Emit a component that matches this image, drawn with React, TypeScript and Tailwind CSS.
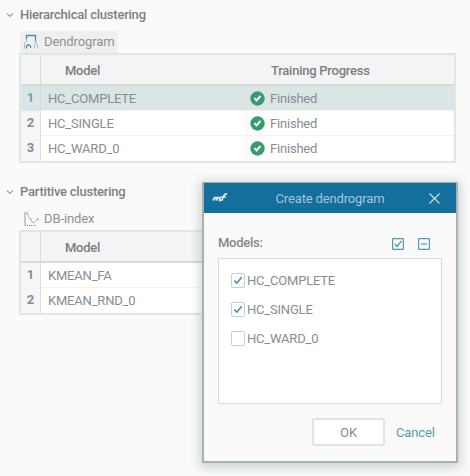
import { ReactNode, useState } from "react";

interface ModelRow {
  name: string;
  status: string;
}

const HIERARCHICAL: ModelRow[] = [
  { name: "HC_COMPLETE", status: "Finished" },
  { name: "HC_SINGLE", status: "Finished" },
  { name: "HC_WARD_0", status: "Finished" },
];

const PARTITIVE: ModelRow[] = [
  { name: "KMEAN_FA", status: "" },
  { name: "KMEAN_RND_0", status: "" },
];

function Chevron() {
  return (
    <svg className="w-2 h-2 shrink-0" viewBox="0 0 8 8" fill="none" stroke="#9aa4a8" strokeWidth="1.2">
      <path d="M1 2.5 4 5.5 7 2.5" />
    </svg>
  );
}

function DendrogramIcon() {
  return (
    <svg className="w-4 h-4 shrink-0" viewBox="0 0 16 16" fill="none">
      <path d="M1.5 14.5V9L3.5 7.5V3" stroke="#b3bdc1" />
      <path d="M3.5 5V1.5H12.5V8" stroke="#3d91b3" strokeWidth="1.3" />
      <path d="M12.5 7V9.5L11.5 10V14M12.5 8.5 14.5 10V14.5" stroke="#b3bdc1" />
      <path d="M3.5 14.5V12L5.5 10.5 7.5 12V14" stroke="#3d91b3" strokeWidth="1.3" />
    </svg>
  );
}

function IndexIcon() {
  return (
    <svg className="w-4 h-4 shrink-0" viewBox="0 0 16 16" fill="none">
      <path d="M2 1V14" stroke="#aab6bb" strokeWidth="1.4" />
      <path d="M2 1.5H3.8L6 6.5 10 12 14.5 8.5" stroke="#aab6bb" />
      <path d="M2 14.5H14" stroke="#4a98b6" strokeDasharray="1 1" />
      <path d="M4 2.5h1v1h-1zM7.5 7.5h1v1h-1zM14 7.5h1.4v1.4h-1.4z" fill="#3d91b3" />
    </svg>
  );
}

function DoneIcon() {
  return (
    <svg className="w-[15px] h-[15px] shrink-0" viewBox="0 0 15 15" fill="none">
      <circle cx="7.5" cy="7.5" r="7.2" fill="#389b6c" />
      <path d="M4.5 7 6.5 9.5 10.5 5" stroke="#fff" strokeWidth="2" />
    </svg>
  );
}

function Section({ title, tool, active, children }: { title: string; tool: ReactNode; active?: boolean; children: ReactNode }) {
  return (
    <section>
      <h2 className="flex items-center gap-1.5 h-5 text-[13px] font-medium tracking-[-0.22px] text-[#7a8185]">
        <Chevron />
        {title}
      </h2>
      <div className="pl-[13px]">
        <button
          className={`flex items-center gap-[5px] h-[22px] mt-[6px] ml-[1px] pl-[3px] pr-[3px] text-[13px] tracking-[-0.1px] text-[#8b9195] ${
            active ? "bg-[#efefef]" : ""
          }`}
        >
          {tool}
        </button>
        {children}
      </div>
    </section>
  );
}

function ModelTable({ rows, selected }: { rows: ModelRow[]; selected?: number }) {
  return (
    <div className="w-[437px] border-2 border-[#dfe6e7] bg-white">
      <div className="flex h-[31px] border-b-2 border-[#d3dbdb] bg-[#f4f4f4] text-[13px] font-medium tracking-[-0.25px] text-[#787e82]">
        <div className="w-5 shrink-0 border-r border-[#d6dfe0]" />
        <div className="w-[206px] shrink-0 pl-[24px] leading-[31px]">Model</div>
        <div className="pl-[24px] leading-[31px]">Training Progress</div>
      </div>
      {rows.map((row, i) => (
        <div
          key={row.name}
          className={`flex h-[25px] text-[13px] tracking-[-0.2px] text-[#868d91] ${i === selected ? "bg-[#dce5e6]" : ""}`}
        >
          <div
            className={`w-5 shrink-0 border-r border-[#d6dfe0] text-center leading-6 font-bold ${
              i === selected ? "text-[#6aa3bb]" : "bg-[#f6f6f6]"
            }`}
          >
            {i + 1}
          </div>
          <div
            className={`flex flex-1 border-b leading-[26px] ${
              i === selected ? "border-[#f1f3f3]" : i === rows.length - 1 ? "border-white" : "border-[#f1f3f3]"
            }`}
          >
            <div className={`w-[206px] shrink-0 border-r pl-[7px] ${i === selected ? "border-[#dce5e6]" : "border-[#f1f3f3]"}`}>
              {row.name}
            </div>
            {row.status && (
              <div className="flex items-center gap-[5px] pl-[3px]">
                <DoneIcon />
                <span className="pt-px">{row.status}</span>
              </div>
            )}
          </div>
        </div>
      ))}
    </div>
  );
}

function CheckRow({ name, checked, onToggle }: { name: string; checked: boolean; onToggle: () => void }) {
  return (
    <button onClick={onToggle} className="flex items-center h-[29px] gap-[2px] text-[13px] tracking-[-0.2px] text-[#868d91]">
      <svg className="w-[14px] h-[15px] shrink-0" viewBox="0 0 14 15" fill="none">
        <rect x=".5" y=".5" width="13" height="14" rx="1.5" fill="#fff" stroke="#c4d0d3" />
        {checked && <path d="M3.2 7.5 5.8 10.2 10.7 4.3" stroke="#3f8bab" strokeWidth="1.5" />}
      </svg>
      {name}
    </button>
  );
}

function CreateDialog() {
  const [checked, setChecked] = useState(["HC_COMPLETE", "HC_SINGLE"]);

  const toggle = (name: string) =>
    setChecked((prev) => (prev.includes(name) ? prev.filter((n) => n !== name) : [...prev, name]));

  return (
    <div className="absolute left-[202px] top-[182px] w-[256px] h-[281px] border-2 border-t-[1px] border-[#abafb0] bg-[#fafafa] shadow-[0_2px_10px_2px_rgba(80,115,115,0.3)]">
      {/* Title bar */}
      <div className="flex items-center h-[30px] pl-2 pr-4 bg-[#136f9c] text-[#a6c6d6]">
        <svg className="w-4 h-3 shrink-0" viewBox="0 0 16 12" fill="none" stroke="#e0ebf0" strokeWidth="1.7">
          <path d="M1 8.5 2.5 5.5 4.5 5.5 4 8.5 6 5.5 8 5.5 7.5 8.5 10 8 12 3.5 13 2.2 15 1.8M9 5H14" />
        </svg>
        <span className="flex-1 pl-[3px] pt-0.5 text-center text-[13px] tracking-[-0.15px]">Create dendrogram</span>
        <svg className="w-[11px] h-[11px] shrink-0" viewBox="0 0 11 11" fill="none" stroke="#c6dbe4" strokeWidth="1.2">
          <path d="M.5 .5 10.5 10.5M10.5 .5 .5 10.5" />
        </svg>
      </div>

      {/* Model picker */}
      <div className="flex items-center h-5 mt-5 pl-[14px] pr-[26px] text-[13px] font-medium tracking-[-0.25px] text-[#82898d]">
        <span className="flex-1">Models:</span>
        <svg className="w-3 h-3 mt-0.5" viewBox="0 0 12 12" fill="none" stroke="#5298b5" strokeWidth="1.2">
          <rect x=".6" y=".6" width="10.8" height="10.8" rx=".5" />
          <path d="M3 6 5 8.5 9.5 3" strokeWidth="1.4" />
        </svg>
        <svg className="w-3 h-3 mt-0.5 ml-[14px]" viewBox="0 0 12 12" fill="none" stroke="#5298b5" strokeWidth="1.2">
          <rect x=".6" y=".6" width="10.8" height="10.8" rx=".5" />
          <path d="M3 6H9" />
        </svg>
      </div>
      <div className="flex flex-col w-[224px] h-[146px] mt-[5px] ml-[14px] pt-[7px] pl-3 border border-[#cfdbdd] bg-white">
        {HIERARCHICAL.map((m) => (
          <CheckRow key={m.name} name={m.name} checked={checked.includes(m.name)} onToggle={() => toggle(m.name)} />
        ))}
      </div>

      {/* Actions */}
      <div className="flex items-center mt-[14px] pl-[108px] text-[13px]">
        <button className="w-[73px] h-[28px] rounded-[3px] border-2 border-[#dde6e8] bg-white pt-px text-[#858b8f]">OK</button>
        <button className="ml-[11px] pt-px tracking-[-0.15px] text-[#5b99b2]">Cancel</button>
      </div>
    </div>
  );
}

export default function App() {
  return (
    <main className="relative w-[470px] h-[476px] overflow-hidden bg-[#fafafa] pt-[5px] pl-[6px] font-['Roboto',sans-serif]">
      <Section title="Hierarchical clustering" active tool={<><DendrogramIcon />Dendrogram</>}>
        <ModelTable rows={HIERARCHICAL} selected={0} />
      </Section>
      <div className="h-[19px]" />
      <Section title="Partitive clustering" tool={<><IndexIcon />DB-index</>}>
        <ModelTable rows={PARTITIVE} />
      </Section>
      <CreateDialog />
    </main>
  );
}
